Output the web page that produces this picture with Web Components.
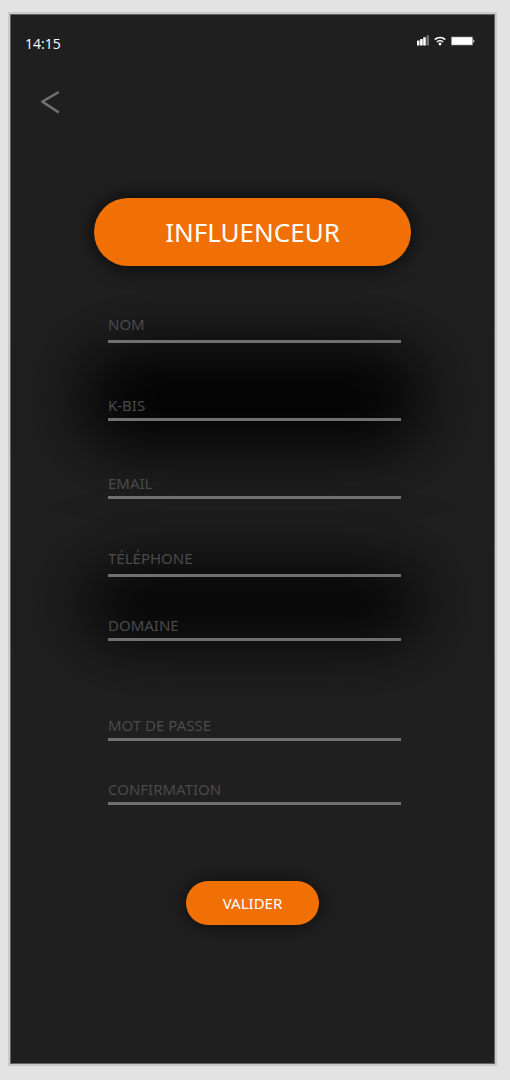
<!DOCTYPE html>
<html lang="fr">
<head>
<meta charset="utf-8">
<meta name="viewport" content="width=device-width, initial-scale=1">
<title>Inscription influenceur</title>
<style>
  html { background: #e3e3e3; }
  body {
    margin: 0; box-sizing: border-box; min-height: 100vh;
    padding: 14px 15px 16px 10px; display: flex;
    font-family: "Noto Sans", Verdana, sans-serif;
    --orange: #f07006; --line: #707070; --panel: #1f1f1f; --label: #4a4a4a;
  }
</style>
</head>
<body>
<phone-screen>
  <status-bar slot="status">14:15</status-bar>
  <back-button slot="nav"></back-button>
  <title-pill>INFLUENCEUR</title-pill>
  <signup-form>
    <line-field name="nom" roomy>NOM</line-field>
    <line-field name="kbis">K-BIS</line-field>
    <line-field name="email" type="email">EMAIL</line-field>
    <line-field name="telephone" type="tel" roomy>TÉLÉPHONE</line-field>
    <line-field name="domaine" close>DOMAINE</line-field>
    <line-field name="motdepasse" type="password" apart>MOT DE PASSE</line-field>
    <line-field name="confirmation" type="password" close>CONFIRMATION</line-field>
    <submit-button slot="action">VALIDER</submit-button>
  </signup-form>
</phone-screen>

<script>
  function define(name, html, setup) {
    const template = document.createElement('template');
    template.innerHTML = html;
    customElements.define(name, class extends HTMLElement {
      constructor() {
        super();
        this.attachShadow({ mode: 'open' }).append(template.content.cloneNode(true));
      }
      connectedCallback() { if (setup) setup(this, this.shadowRoot); }
    });
  }

  define('phone-screen', `
    <style>
      :host {
        display: flex; flex-direction: column; flex: 1; min-width: 0; box-sizing: border-box;
        overflow: hidden; background: var(--panel);
        border: 1px solid #626464; outline: 2px solid #cacaca;
      }
      main { display: flex; flex-direction: column; padding: 84px 0 40px; }
    </style>
    <slot name="status"></slot>
    <slot name="nav"></slot>
    <main><slot></slot></main>`);

  define('status-bar', `
    <style>
      :host { display: flex; justify-content: space-between; align-items: flex-start; padding: 16px 19px 0 14px; color: #fff; }
      .time { font: 14px/26px "Open Sans", sans-serif; }
      svg { display: block; }
    </style>
    <span class="time"><slot></slot></span>
    <svg width="58" height="20" viewBox="0 0 58 20" role="img" aria-label="Réseau, Wi-Fi et batterie">
      <g fill="#fff">
        <rect x="0" y="9.5" width="2.5" height="4.9" rx=".5"/>
        <rect x="3.1" y="8" width="2.6" height="6.4" rx=".5"/>
        <rect x="6.2" y="6.3" width="2.6" height="8.1" rx=".5"/>
        <rect x="9.5" y="4.3" width="2.4" height="10.1" rx=".5" fill="#777"/>
        <circle cx="23" cy="13" r="1.4"/>
      </g>
      <g fill="none" stroke="#fff" stroke-width="1.5">
        <path d="M17.8 8.6C20.7 5.7 25.3 5.7 28.2 8.6"/>
        <path d="M20 11C21.7 9.3 24.3 9.3 26 11"/>
      </g>
      <rect x="34.5" y="6" width="21" height="8" fill="#fff" stroke="#999" stroke-width=".6"/>
      <path d="M56.2 8.3C57.8 8.8 57.8 11.2 56.2 11.7z" fill="#ddd"/>
    </svg>`);

  define('back-button', `
    <style>
      :host { display: flex; padding: 33px 30px 0; }
      button { padding: 0; border: 0; background: none; cursor: pointer; }
      svg { display: block; }
    </style>
    <button type="button" aria-label="Retour">
      <svg width="20" height="24" viewBox="0 0 20 24" fill="none" stroke="#707070" stroke-width="2.6" stroke-linejoin="round">
        <path d="M17.8 2L1.3 11.7L17.8 22.5"/>
      </svg>
    </button>`);

  define('title-pill', `
    <style>
      :host { display: block; margin: 0 83px; }
      h1 {
        margin: 0; border-radius: 34px; background: var(--orange); color: #fff;
        font-size: 26px; font-weight: 400; line-height: 68px; text-align: center;
        box-shadow: 0 0 20px rgba(0, 0, 0, .8);
      }
    </style>
    <h1><slot></slot></h1>`);

  define('signup-form', `
    <style>
      :host { display: block; margin-top: 39px; }
      form { display: flex; flex-direction: column; }
      .fields { position: relative; isolation: isolate; display: flex; flex-direction: column; margin: 0 93px 0 97px; }
      /* Soft shadows lying behind the two groups of fields. */
      .fields::before, .fields::after {
        content: ""; position: absolute; z-index: -1; left: -24px; right: -20px;
        border-radius: 40px; background: #000; filter: blur(34px);
      }
      .fields::before { top: 45px; height: 96px; }
      .fields::after { top: 263px; height: 70px; }
      .actions { display: flex; justify-content: center; margin-top: 76px; }
    </style>
    <form>
      <div class="fields"><slot></slot></div>
      <div class="actions"><slot name="action"></slot></div>
    </form>`);

  define('line-field', `
    <style>
      :host { display: grid; margin-top: 40px; }
      :host(:first-child) { margin-top: 0; }
      :host([close]) { margin-top: 26px; }
      :host([apart]) { margin-top: 62px; }
      input, label { grid-area: 1 / 1; }
      input {
        box-sizing: border-box; width: 100%; height: 38px; margin: 0; padding: 12px 0 0;
        border: 0; border-bottom: 3px solid var(--line); border-radius: 0; outline: 0;
        background: none; color: #ccc; font: inherit; font-size: 15px;
      }
      label {
        align-self: end; padding-bottom: 6px; pointer-events: none;
        color: var(--label); font-size: 15px; line-height: 20px;
      }
      :host([roomy]) label { padding-bottom: 9px; }
      input:focus { border-color: var(--orange); }
      input:focus + label, input:not(:placeholder-shown) + label { visibility: hidden; }
    </style>
    <input id="field" placeholder=" ">
    <label for="field"><slot></slot></label>`, (host, root) => {
    const input = root.querySelector('input');
    input.type = host.getAttribute('type') || 'text';
    input.name = host.getAttribute('name');
  });

  define('submit-button', `
    <style>
      :host { display: block; }
      button {
        width: 133px; height: 44px; padding: 0; border: 0; border-radius: 22px;
        background: var(--orange); color: #fff; font: inherit; font-size: 15px; line-height: 20px;
        box-shadow: 0 0 20px rgba(0, 0, 0, .6); cursor: pointer;
      }
    </style>
    <button type="button"><slot></slot></button>`);
</script>
</body>
</html>
